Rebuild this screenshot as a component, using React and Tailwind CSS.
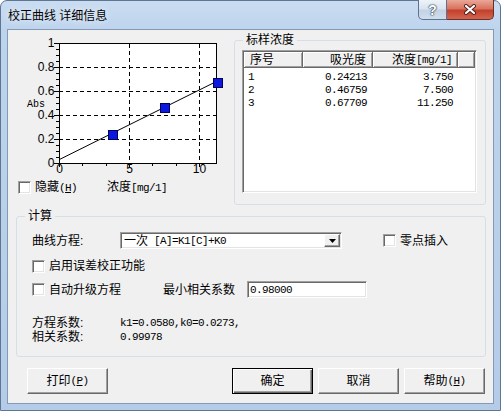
import React from 'react';

// shared control looks (classic 3D edges)
const sunken =
  'border border-t-[#a0a0a0] border-l-[#a0a0a0] border-r-white border-b-white shadow-[inset_1px_1px_0_#696969,inset_-1px_-1px_0_#e3e3e3]';
const raised =
  'border border-t-white border-l-white border-r-[#696969] border-b-[#696969] shadow-[inset_-1px_-1px_0_#a0a0a0]';
const mono = "font-['Liberation_Mono',monospace] text-[11px] tracking-[-0.6px]";

function Mono({ children }) {
  return <span className={mono}>{children}</span>;
}

function Checkbox() {
  return <span className={`block w-[13px] h-[13px] shrink-0 bg-white ${sunken}`} />;
}

function Button({ children, primary }) {
  const cls = primary
    ? 'border border-black shadow-[inset_1px_1px_0_#fff,inset_-1px_-1px_0_#696969,inset_-2px_-2px_0_#a0a0a0]'
    : raised;
  return (
    <button className={`w-[81px] h-[26px] bg-[#f0f0f0] flex items-center justify-center ${cls}`}>
      {children}
    </button>
  );
}

function Chart() {
  const X0 = 41, YB = 127, SX = 14, SY = 120, W = 157;
  const px = (v) => X0 + v * SX;
  const py = (v) => YB - v * SY;
  const yMajor = [0, 0.2, 0.4, 0.6, 0.8, 1];
  const yMinor = [];
  for (let i = 1; i < 20; i++) if (i % 4) yMinor.push(i * 0.05);
  const xMinor = [5 / 3, 10 / 3, 20 / 3, 25 / 3];
  const pts = [[3.75, 0.24213], [7.5, 0.46759], [11.25, 0.67709]];
  const xEnd = W / SX;
  const hy = (v) => Math.round(py(v)) + 0.5;
  const vx = (v) => Math.round(px(v)) + 0.5;

  return (
    <svg width="208" height="144" className="block">
      <rect x="41.5" y="7.5" width="157" height="120" fill="#fff" stroke="#000" shapeRendering="crispEdges" />
      {[0.2, 0.4, 0.6, 0.8].map((v) => (
        <line key={'h' + v} x1={X0} x2={X0 + W} y1={hy(v)} y2={hy(v)} stroke="#000" strokeDasharray="4 3" shapeRendering="crispEdges" />
      ))}
      {[5, 10].map((v) => (
        <line key={'v' + v} x1={vx(v)} x2={vx(v)} y1={8} y2={YB} stroke="#000" strokeDasharray="4 3" shapeRendering="crispEdges" />
      ))}
      <line x1={px(0)} y1={py(0.0273)} x2={px(xEnd)} y2={py(0.058 * xEnd + 0.0273)} stroke="#000" strokeWidth="1" />

      {/* axis ticks */}
      {yMajor.map((v) => (
        <line key={'ym' + v} x1={36} x2={41} y1={hy(v)} y2={hy(v)} stroke="#000" shapeRendering="crispEdges" />
      ))}
      {yMinor.map((v) => (
        <line key={'yn' + v} x1={38} x2={41} y1={hy(v)} y2={hy(v)} stroke="#000" shapeRendering="crispEdges" />
      ))}
      {[0, 5, 10].map((v) => (
        <line key={'xm' + v} x1={vx(v)} x2={vx(v)} y1={127} y2={131} stroke="#000" shapeRendering="crispEdges" />
      ))}
      {xMinor.map((v) => (
        <line key={'xn' + v} x1={vx(v)} x2={vx(v)} y1={127} y2={130} stroke="#000" shapeRendering="crispEdges" />
      ))}

      {pts.map(([x, y]) => (
        <rect key={x} x={Math.round(px(x)) - 4} y={Math.round(py(y)) - 4} width="9" height="9" fill="#0c18e0" stroke="#00005a" shapeRendering="crispEdges" />
      ))}

      <g fontFamily="Liberation Sans, Arial, sans-serif" fontSize="12" fill="#000">
        {yMajor.map((v) => (
          <text key={'yl' + v} x="36.5" y={py(v) + 4.3} textAnchor="end">
            {v === 0 || v === 1 ? v : v.toFixed(1)}
          </text>
        ))}
        {[0, 5, 10].map((v) => (
          <text key={'xl' + v} x={px(v) + 0.5} y="137" textAnchor="middle">{v}</text>
        ))}
      </g>
      <text x="9" y="70.5" fontFamily="Liberation Mono, monospace" fontSize="10" fill="#000">Abs</text>
    </svg>
  );
}

const rows = [
  ['1', '0.24213', '3.750'],
  ['2', '0.46759', '7.500'],
  ['3', '0.67709', '11.250'],
];

const headCell =
  'h-full flex items-center border-r border-b border-r-[#696969] border-b-[#696969] shadow-[inset_1px_1px_0_#fff,inset_-1px_-1px_0_#a0a0a0]';

function StandardList() {
  return (
    <div className={`w-[235px] h-[143px] bg-white p-[1px] flex flex-col ${sunken}`}>
      <div className="flex h-[16px] bg-[#f0f0f0]">
        <div className={`w-[59px] pl-[6px] ${headCell}`}>序号</div>
        <div className={`w-[70px] justify-end pr-[6px] ${headCell}`}>吸光度</div>
        <div className={`w-[85px] justify-end pr-[5px] ${headCell}`}>
          浓度<Mono>[mg/1]</Mono>
        </div>
        <div className={`flex-1 ${headCell}`} />
      </div>
      <div className="pt-[2px]">
        {rows.map(([n, a, c]) => (
          <div key={n} className={`flex h-[13px] items-center ${mono}`}>
            <div className="w-[59px] pl-[4px]">{n}</div>
            <div className="w-[70px] text-right pr-[6px]">{a}</div>
            <div className="w-[85px] text-right pr-[5px]">{c}</div>
          </div>
        ))}
      </div>
    </div>
  );
}

export default function App() {
  return (
    <div className="w-[501px] h-[411px] overflow-hidden text-[12px] leading-[14px] text-black font-['Liberation_Sans','Noto_Sans_CJK_SC',sans-serif]">
      <div className="flex flex-col w-full h-full border border-[#5f7691] rounded-t-[7px] bg-[linear-gradient(180deg,#cadcf1_0%,#bdd4ed_30px,#b4cce8_100%)] px-[6px] pb-[6px]">
        {/* caption */}
        <div className="h-[28px] flex items-start">
          <div className="pl-[1px] pt-[7px] leading-[16px] [text-shadow:0_0_6px_#fff]">校正曲线 详细信息</div>
          <div className="ml-auto flex -mt-px">
            <div className="w-[29px] h-[20px] border border-t-0 border-[#5d7190] rounded-bl-[5px] bg-[linear-gradient(180deg,#eef3f9_0%,#d9e4f0_45%,#c3d3e5_55%,#d0ddec_100%)] flex items-center justify-center">
              <span className="font-['Liberation_Sans',sans-serif] font-bold text-[14px] leading-[14px] text-white [text-shadow:0_0_1px_#2d3b4d,0_0_1px_#2d3b4d,0_0_2px_#2d3b4d]">?</span>
            </div>
            <div className="w-[47px] h-[20px] border border-t-0 border-l-0 border-[#6a2f28] rounded-br-[5px] bg-[linear-gradient(180deg,#eba798_0%,#d9735f_45%,#c3402c_55%,#d2664f_100%)] flex items-center justify-center">
              <svg width="14" height="11" viewBox="0 0 14 11">
                <path d="M3 2 L11 9 M11 2 L3 9" stroke="#4a1d18" strokeWidth="4" strokeLinecap="round" />
                <path d="M3 2 L11 9 M11 2 L3 9" stroke="#fff" strokeWidth="2.2" strokeLinecap="round" />
              </svg>
            </div>
          </div>
        </div>

        {/* client area */}
        <div className="flex-1 border border-[#8599b3] bg-[#f0f0f0] flex flex-col">
          <div className="flex items-start">
            <div className="ml-[10px] mt-[6px] w-[208px] flex flex-col">
              <Chart />
              <div className="h-[15px] flex items-center">
                <div className="w-[89px] flex items-center gap-[4px]">
                  <Checkbox />
                  <span>隐藏<Mono>(<u>H</u>)</Mono></span>
                </div>
                <span>浓度<Mono>[mg/1]</Mono></span>
              </div>
            </div>

            <fieldset className="ml-[8px] mt-[3px] w-[252px] h-[172px] border border-[#d5dfe5] rounded-[3px]">
              <legend className="ml-[8px] px-[3px] leading-[14px]">标样浓度</legend>
              <div className="ml-[7px] mt-[3px]">
                <StandardList />
              </div>
            </fieldset>
          </div>

          <fieldset className="ml-[8px] mt-[4px] w-[470px] h-[148px] border border-[#d5dfe5] rounded-[3px]">
            <legend className="ml-[8px] px-[3px] leading-[14px]">计算</legend>

            <div className="mt-[9px] h-[17px] flex items-center">
              <div className="w-[103px] pl-[15px]">曲线方程:</div>
              <div className={`w-[222px] h-[17px] bg-white p-[1px] flex ${sunken}`}>
                <div className="flex-1 pl-[2px] flex items-center whitespace-pre">
                  一次<Mono> [A]=K1[C]+K0</Mono>
                </div>
                <div className={`w-[16px] h-full bg-[#f0f0f0] flex items-center justify-center ${raised}`}>
                  <svg width="7" height="4" viewBox="0 0 7 4">
                    <polygon points="0,0 7,0 3.5,4" fill="#000" />
                  </svg>
                </div>
              </div>
              <div className="ml-[41px] flex items-center gap-[4px]">
                <Checkbox />
                <span>零点插入</span>
              </div>
            </div>

            <div className="mt-[10px] h-[14px] pl-[15px] flex items-center gap-[4px]">
              <Checkbox />
              <span>启用误差校正功能</span>
            </div>

            <div className="mt-[8px] h-[17px] pl-[15px] flex items-center">
              <div className="w-[131px] flex items-center gap-[4px]">
                <Checkbox />
                <span>自动升级方程</span>
              </div>
              <div className="w-[84px]">最小相关系数</div>
              <div className={`w-[120px] h-[17px] bg-white pl-[2px] flex items-center ${sunken}`}>
                <Mono>0.98000</Mono>
              </div>
            </div>

            <div className="mt-[18px] pl-[15px] flex h-[14px] items-center">
              <div className="w-[88px]">方程系数:</div>
              <Mono>k1=0.0580,k0=0.0273,</Mono>
            </div>
            <div className="pl-[15px] flex h-[14px] items-center">
              <div className="w-[88px]">相关系数:</div>
              <Mono>0.99978</Mono>
            </div>
          </fieldset>

          <div className="mt-[11px] flex pl-[19px] pr-[8px]">
            <Button>
              打印<Mono>(<u>P</u>)</Mono>
            </Button>
            <div className="ml-auto flex gap-[5px]">
              <Button primary>确定</Button>
              <Button>取消</Button>
              <Button>
                帮助<Mono>(<u>H</u>)</Mono>
              </Button>
            </div>
          </div>
        </div>
      </div>
    </div>
  );
}
